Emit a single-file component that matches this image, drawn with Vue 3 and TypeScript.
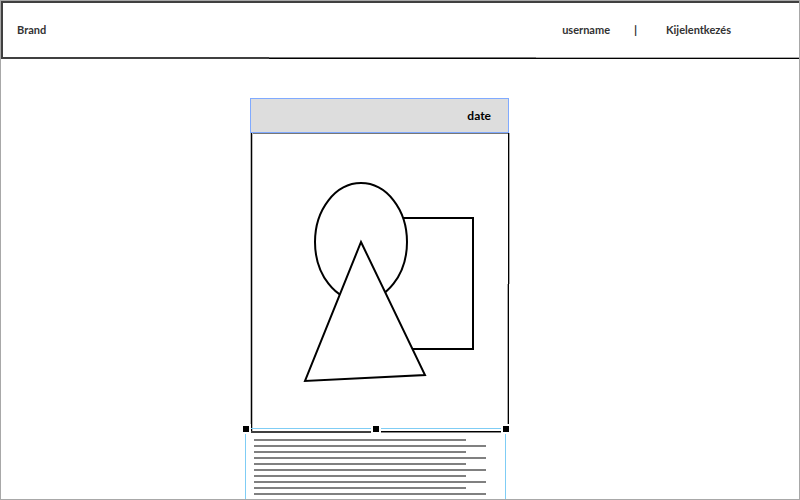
<script setup lang="ts">
import { computed } from 'vue'

interface Line {
  id: number
  short: boolean
}

const brand = 'Brand'
const username = 'username'
const postDate = 'date'
const lineCount = 10

const lines = computed<Line[]>(() =>
  Array.from({ length: lineCount }, (_, id) => ({ id, short: id % 2 === 0 })),
)
</script>

<template>
  <div class="page">
    <header class="topbar">
      <a class="brand" href="#">{{ brand }}</a>
      <nav class="account" aria-label="Account">
        <a href="#">{{ username }}</a>
        <span class="divider">|</span>
        <a href="#">Kijelentkezés</a>
      </nav>
      <svg class="rule" viewBox="0 0 798 3" preserveAspectRatio="none" aria-hidden="true">
        <path d="M0 1H268" stroke="#404040" stroke-width="2" />
        <path d="M268 1.5H535" stroke="#000" stroke-width="1" />
        <path d="M268 .5H535" stroke="#777" stroke-width="1" />
        <path d="M535 .5H798" stroke="#aaa" stroke-width="1" />
        <path d="M535 1.5H798" stroke="#000" stroke-width="1" />
      </svg>
    </header>

    <main class="content">
      <article class="card">
        <div class="card-head">
          <time>{{ postDate }}</time>
        </div>
        <svg class="picture" viewBox="0 0 260 300" fill="none" stroke="#000" stroke-width="2" aria-hidden="true">
          <path d="M1 .5H259" stroke="#777" stroke-width="1" />
          <path d="M1.5 0V299" stroke-width="1" />
          <path d="M.5 0V299M2.5 0V299" stroke="#bbb" stroke-width="1" />
          <path d="M258.5 0V291" stroke-width="1" />
          <path d="M259.5 0V151M257.5 151V291" stroke="#aaa" stroke-width="1" />
          <path d="M1 299H126" stroke="#404040" />
          <path d="M126 298.5H258" stroke-width="1" />
          <path d="M126 299.5H258" stroke="#888" stroke-width="1" />
          <rect x="126" y="85" width="97" height="131" />
          <ellipse cx="111" cy="109" rx="46" ry="59" fill="#fff" />
          <path d="M111 109L175 242L55 248Z" fill="#fff" />
        </svg>

        <section class="selection">
          <i class="handle start"></i>
          <i class="handle middle"></i>
          <i class="handle end"></i>
          <div class="lines">
            <div v-for="line in lines" :key="line.id" class="line" :class="{ short: line.short }"></div>
          </div>
        </section>
      </article>
    </main>
  </div>
</template>

<style>
body {
  margin: 0;
  background: #fff;
}
</style>

<style scoped>
.page {
  box-sizing: border-box;
  min-height: 100vh;
  display: flex;
  flex-direction: column;
  border: 1px solid #a8a8a8;
  background: #fff;
  color: #333;
  font-family: Lato, 'Open Sans', sans-serif;
  font-size: 11px;
  font-weight: 700;
  line-height: 16px;
}

.topbar {
  position: relative;
  box-sizing: border-box;
  height: 58px;
  display: flex;
  align-items: center;
  justify-content: space-between;
  padding: 0 68px 2px 14px;
  border-top: 2px solid #404040;
  border-left: 2px solid #404040;
}

.topbar a {
  color: inherit;
  text-decoration: none;
}

.account {
  display: flex;
  align-items: center;
  gap: 24px;
}

.divider {
  width: 8px;
  font-size: 12px;
  text-align: left;
}

.rule {
  position: absolute;
  left: -2px;
  right: 0;
  bottom: -1px;
  width: calc(100% + 2px);
  height: 3px;
}

.content {
  flex: 1;
  display: flex;
  justify-content: center;
  padding: 39px 41px 0 0;
}

.card {
  width: 259px;
  display: flex;
  flex-direction: column;
}

.card-head {
  box-sizing: border-box;
  height: 35px;
  display: flex;
  align-items: center;
  justify-content: flex-end;
  padding-right: 17px;
  border: 1px solid #80aaff;
  background: #ddd;
  color: #000;
  font-size: 12px;
}

.picture {
  display: block;
  width: 260px;
  height: 300px;
}

.selection {
  position: relative;
  box-sizing: border-box;
  flex: 1;
  width: 261px;
  margin: -5px 0 0 -5px;
  padding: 10px 19px 4px 8px;
  border: 1px solid #7fcdf5;
  border-bottom: 0;
}

.handle {
  position: absolute;
  top: -5px;
  width: 6px;
  height: 6px;
  border: 2px solid #fff;
  background: #000;
}

.start {
  left: -5px;
}

.middle {
  left: calc(50% - 5px);
}

.end {
  right: -6px;
}

.lines {
  display: flex;
  flex-direction: column;
  gap: 4px;
}

.line {
  height: 2px;
  background: #808080;
}

.short {
  margin-right: 20px;
}
</style>
